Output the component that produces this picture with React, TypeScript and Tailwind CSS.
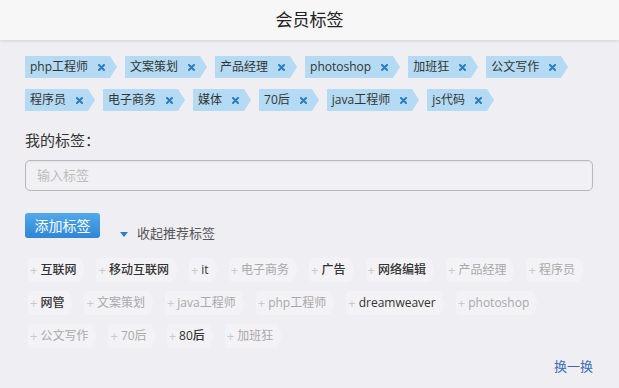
import React from 'react';

const myTags = [
  ['php工程师', '文案策划', '产品经理', 'photoshop', '加班狂', '公文写作'],
  ['程序员', '电子商务', '媒体', '70后', 'java工程师', 'js代码'],
];

// [label, strong]
const suggested: [string, boolean][][] = [
  [
    ['互联网', true],
    ['移动互联网', true],
    ['it', true],
    ['电子商务', false],
    ['广告', true],
    ['网络编辑', true],
    ['产品经理', false],
    ['程序员', false],
  ],
  [
    ['网管', true],
    ['文案策划', false],
    ['java工程师', false],
    ['php工程师', false],
    ['dreamweaver', true],
    ['photoshop', false],
  ],
  [
    ['公文写作', false],
    ['70后', false],
    ['80后', true],
    ['加班狂', false],
  ],
];

function Tip({ color }: { color: string }) {
  return (
    <svg width="8" height="22" viewBox="0 0 8 22" className="block shrink-0">
      <polygon points="0,0 1,0 8,11 1,22 0,22" fill={color} />
    </svg>
  );
}

function MyTag({ label }: { label: string }) {
  return (
    <div className="flex items-stretch h-[22px] shrink-0">
      <div className="flex items-center bg-[#b4dbf3] pl-[5px] pr-[4px] gap-[10px] whitespace-nowrap">
        <span className="text-[12px] text-[#333]">{label}</span>
        <svg width="7" height="7" viewBox="0 0 7 7" className="block shrink-0">
          <path d="M1,1 L6,6 M6,1 L1,6" stroke="#2a7cc2" strokeWidth="2" strokeLinecap="round" />
        </svg>
      </div>
      <Tip color="#b4dbf3" />
    </div>
  );
}

function SuggestTag({ label, strong }: { label: string; strong: boolean }) {
  return (
    <div className="flex items-stretch h-[24px] shrink-0">
      <div className="flex items-center bg-[#f3f2f6] pl-[2px] gap-[3px] rounded-l-[4px] whitespace-nowrap">
        <span className="text-[13px] text-[#cacaca] leading-none">+</span>
        <span className={strong ? 'text-[12px] text-[#333] font-medium' : 'text-[12px] text-[#a9a9a9]'}>{label}</span>
      </div>
      <svg width="9" height="24" viewBox="0 0 9 24" className="block shrink-0">
        <path d="M0,0 L2,0 Q4,0 5,2 L8,10 Q9,12 8,14 L5,22 Q4,24 2,24 L0,24 Z" fill="#f3f2f6" />
      </svg>
    </div>
  );
}

export default function App() {
  return (
    <div
      className="w-[619px] h-[388px] bg-[#efeef3] overflow-hidden"
      style={{ fontFamily: '"Open Sans", "Noto Sans CJK SC", sans-serif' }}
    >
      {/* Header */}
      <div className="h-[40px] bg-[#f7f7f8] shadow-[0_1px_3px_rgba(0,0,0,0.12)] flex items-center justify-center relative">
        <span className="text-[17px] text-[#222]">会员标签</span>
      </div>

      <div className="pl-[25px] pr-[26px] pt-[16px]">
        {/* Chosen tags */}
        <div className="flex flex-col gap-[11px]">
          {myTags.map((row, i) => (
            <div key={i} className="flex gap-[8px]">
              {row.map((t) => (
                <MyTag key={t} label={t} />
              ))}
            </div>
          ))}
        </div>

        <div className="mt-[19px] text-[15px] text-[#333] leading-[20px]">我的标签：</div>

        <div className="mt-[10px] h-[31px] border border-[#b9b9bd] rounded-[5px] bg-[#f1f0f4] flex items-center pl-[11px] shadow-[inset_0_1px_2px_rgba(0,0,0,0.06)]">
          <span className="text-[13px] text-[#bcbcbc]">输入标签</span>
        </div>

        <div className="mt-[22px] flex items-end">
          <button className="h-[25px] w-[75px] rounded-[3px] bg-gradient-to-b from-[#52a9ea] to-[#2e86d6] text-white text-[14px] flex items-center justify-center">
            添加标签
          </button>
          <div className="ml-[20px] flex items-center gap-[9px] h-[20px] -mb-[6px]">
            <svg width="8" height="5" viewBox="0 0 8 5" className="block">
              <polygon points="0,0 8,0 4,5" fill="#2f7cc4" />
            </svg>
            <span className="text-[13px] text-[#555]">收起推荐标签</span>
          </div>
        </div>

        {/* Suggested tags */}
        <div className="mt-[20px] flex flex-col gap-[9px] pl-[3px]">
          {suggested.map((row, i) => (
            <div key={i} className="flex gap-[11px]">
              {row.map(([t, s]) => (
                <SuggestTag key={t} label={t} strong={s} />
              ))}
            </div>
          ))}
        </div>

        <div className="flex justify-end mt-[9px]">
          <span className="text-[13px] text-[#3a6db5]">换一换</span>
        </div>
      </div>
    </div>
  );
}
